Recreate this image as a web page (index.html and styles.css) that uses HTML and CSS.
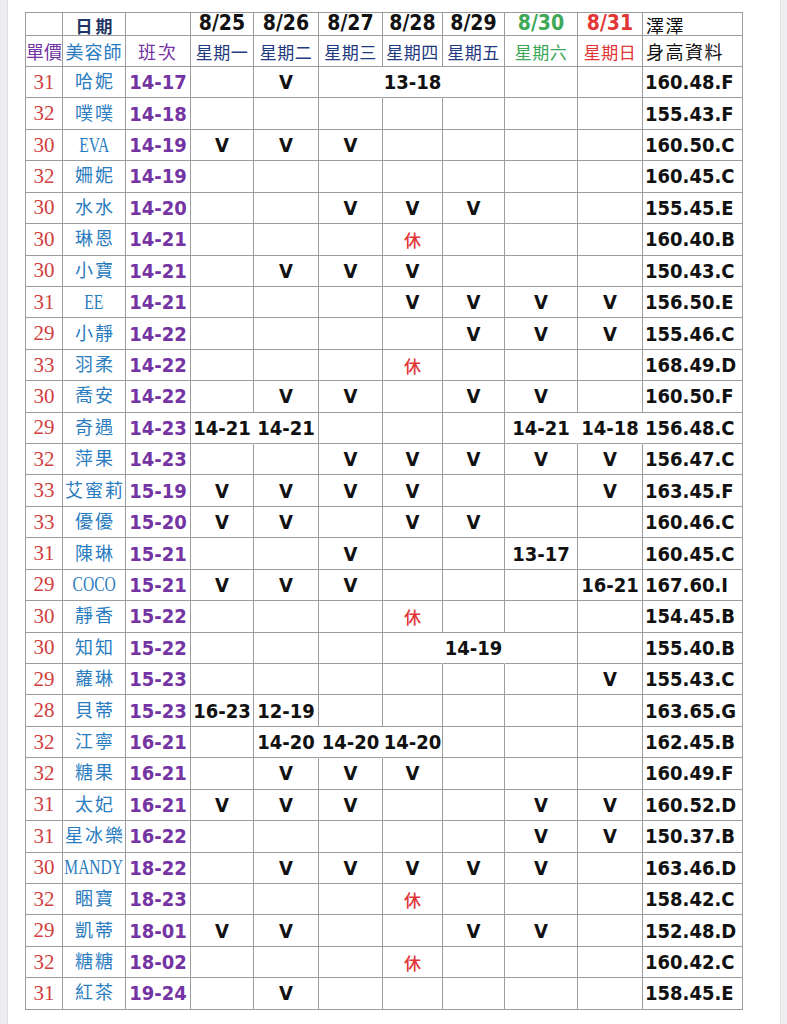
FILE: index.html
```html
<!DOCTYPE html>
<html lang="zh-Hant">
<head>
<meta charset="utf-8">
<title>排班表</title>
<link rel="stylesheet" href="styles.css">
</head>
<body>
<div class="edge edge-left"></div>
<main class="page">
<table class="sheet">
<colgroup>
<col class="c1"><col class="c2"><col class="c3"><col class="c4"><col class="c5"><col class="c6"><col class="c7"><col class="c8"><col class="c9"><col class="c10"><col class="c11">
</colgroup>
<tbody>
<tr class="hr1">
<td></td><td class="hdate">日期</td><td></td>
<td class="dt">8/25</td><td class="dt">8/26</td><td class="dt">8/27</td><td class="dt">8/28</td><td class="dt">8/29</td><td class="dt green">8/30</td><td class="dt red">8/31</td>
<td class="hz">澤澤</td>
</tr>
<tr class="hr2">
<td class="hprice">單價</td><td class="hname">美容師</td><td class="hshift">班次</td>
<td class="wk">星期一</td><td class="wk">星期二</td><td class="wk">星期三</td><td class="wk">星期四</td><td class="wk">星期五</td><td class="wk green">星期六</td><td class="wk red">星期日</td>
<td class="hz">身高資料</td>
</tr>
<tr><td class="p">31</td><td class="n">哈妮</td><td class="s">14-17</td><td class="d"></td><td class="d">V</td><td class="d nr"></td><td class="d nr">13-18</td><td class="d"></td><td class="d"></td><td class="d"></td><td class="h">160.48.F</td></tr>
<tr><td class="p">32</td><td class="n">噗噗</td><td class="s">14-18</td><td class="d"></td><td class="d"></td><td class="d"></td><td class="d"></td><td class="d"></td><td class="d"></td><td class="d"></td><td class="h">155.43.F</td></tr>
<tr><td class="p">30</td><td class="n"><span class="lat">EVA</span></td><td class="s">14-19</td><td class="d">V</td><td class="d">V</td><td class="d">V</td><td class="d"></td><td class="d"></td><td class="d"></td><td class="d"></td><td class="h">160.50.C</td></tr>
<tr><td class="p">32</td><td class="n">姍妮</td><td class="s">14-19</td><td class="d"></td><td class="d"></td><td class="d"></td><td class="d"></td><td class="d"></td><td class="d"></td><td class="d"></td><td class="h">160.45.C</td></tr>
<tr><td class="p">30</td><td class="n">水水</td><td class="s">14-20</td><td class="d"></td><td class="d"></td><td class="d">V</td><td class="d">V</td><td class="d">V</td><td class="d"></td><td class="d"></td><td class="h">155.45.E</td></tr>
<tr><td class="p">30</td><td class="n">琳恩</td><td class="s">14-21</td><td class="d"></td><td class="d"></td><td class="d"></td><td class="d rest">休</td><td class="d"></td><td class="d"></td><td class="d"></td><td class="h">160.40.B</td></tr>
<tr><td class="p">30</td><td class="n">小寶</td><td class="s">14-21</td><td class="d"></td><td class="d">V</td><td class="d">V</td><td class="d">V</td><td class="d"></td><td class="d"></td><td class="d"></td><td class="h">150.43.C</td></tr>
<tr><td class="p">31</td><td class="n"><span class="lat">EE</span></td><td class="s">14-21</td><td class="d"></td><td class="d"></td><td class="d"></td><td class="d">V</td><td class="d">V</td><td class="d">V</td><td class="d">V</td><td class="h">156.50.E</td></tr>
<tr><td class="p">29</td><td class="n">小靜</td><td class="s">14-22</td><td class="d"></td><td class="d"></td><td class="d"></td><td class="d"></td><td class="d">V</td><td class="d">V</td><td class="d">V</td><td class="h">155.46.C</td></tr>
<tr><td class="p">33</td><td class="n">羽柔</td><td class="s">14-22</td><td class="d"></td><td class="d"></td><td class="d"></td><td class="d rest">休</td><td class="d"></td><td class="d"></td><td class="d"></td><td class="h">168.49.D</td></tr>
<tr><td class="p">30</td><td class="n">喬安</td><td class="s">14-22</td><td class="d"></td><td class="d">V</td><td class="d">V</td><td class="d"></td><td class="d">V</td><td class="d">V</td><td class="d"></td><td class="h">160.50.F</td></tr>
<tr><td class="p">29</td><td class="n">奇遇</td><td class="s">14-23</td><td class="d nr">14-21</td><td class="d">14-21</td><td class="d"></td><td class="d"></td><td class="d"></td><td class="d nr">14-21</td><td class="d nr">14-18</td><td class="h">156.48.C</td></tr>
<tr><td class="p">32</td><td class="n">萍果</td><td class="s">14-23</td><td class="d"></td><td class="d"></td><td class="d">V</td><td class="d">V</td><td class="d">V</td><td class="d">V</td><td class="d">V</td><td class="h">156.47.C</td></tr>
<tr><td class="p">33</td><td class="n">艾蜜莉</td><td class="s">15-19</td><td class="d">V</td><td class="d">V</td><td class="d">V</td><td class="d">V</td><td class="d"></td><td class="d"></td><td class="d">V</td><td class="h">163.45.F</td></tr>
<tr><td class="p">33</td><td class="n">優優</td><td class="s">15-20</td><td class="d">V</td><td class="d">V</td><td class="d"></td><td class="d">V</td><td class="d">V</td><td class="d"></td><td class="d"></td><td class="h">160.46.C</td></tr>
<tr><td class="p">31</td><td class="n">陳琳</td><td class="s">15-21</td><td class="d"></td><td class="d"></td><td class="d">V</td><td class="d"></td><td class="d"></td><td class="d">13-17</td><td class="d"></td><td class="h">160.45.C</td></tr>
<tr><td class="p">29</td><td class="n"><span class="lat">COCO</span></td><td class="s">15-21</td><td class="d">V</td><td class="d">V</td><td class="d">V</td><td class="d"></td><td class="d"></td><td class="d"></td><td class="d">16-21</td><td class="h">167.60.I</td></tr>
<tr><td class="p">30</td><td class="n">靜香</td><td class="s">15-22</td><td class="d"></td><td class="d"></td><td class="d"></td><td class="d rest">休</td><td class="d"></td><td class="d"></td><td class="d"></td><td class="h">154.45.B</td></tr>
<tr><td class="p">30</td><td class="n">知知</td><td class="s">15-22</td><td class="d"></td><td class="d"></td><td class="d"></td><td class="d nr"></td><td class="d nr">14-19</td><td class="d"></td><td class="d"></td><td class="h">155.40.B</td></tr>
<tr><td class="p">29</td><td class="n">蘿琳</td><td class="s">15-23</td><td class="d"></td><td class="d"></td><td class="d"></td><td class="d"></td><td class="d"></td><td class="d"></td><td class="d">V</td><td class="h">155.43.C</td></tr>
<tr><td class="p">28</td><td class="n">貝蒂</td><td class="s">15-23</td><td class="d">16-23</td><td class="d">12-19</td><td class="d"></td><td class="d"></td><td class="d"></td><td class="d"></td><td class="d"></td><td class="h">163.65.G</td></tr>
<tr><td class="p">32</td><td class="n">江寧</td><td class="s">16-21</td><td class="d"></td><td class="d nr">14-20</td><td class="d nr">14-20</td><td class="d">14-20</td><td class="d"></td><td class="d"></td><td class="d"></td><td class="h">162.45.B</td></tr>
<tr><td class="p">32</td><td class="n">糖果</td><td class="s">16-21</td><td class="d"></td><td class="d">V</td><td class="d">V</td><td class="d">V</td><td class="d"></td><td class="d"></td><td class="d"></td><td class="h">160.49.F</td></tr>
<tr><td class="p">31</td><td class="n">太妃</td><td class="s">16-21</td><td class="d">V</td><td class="d">V</td><td class="d">V</td><td class="d"></td><td class="d"></td><td class="d">V</td><td class="d">V</td><td class="h">160.52.D</td></tr>
<tr><td class="p">31</td><td class="n">星冰樂</td><td class="s">16-22</td><td class="d"></td><td class="d"></td><td class="d"></td><td class="d"></td><td class="d"></td><td class="d">V</td><td class="d">V</td><td class="h">150.37.B</td></tr>
<tr><td class="p">30</td><td class="n"><span class="lat">MANDY</span></td><td class="s">18-22</td><td class="d"></td><td class="d">V</td><td class="d">V</td><td class="d">V</td><td class="d">V</td><td class="d">V</td><td class="d"></td><td class="h">163.46.D</td></tr>
<tr><td class="p">32</td><td class="n">睏寶</td><td class="s">18-23</td><td class="d"></td><td class="d"></td><td class="d"></td><td class="d rest">休</td><td class="d"></td><td class="d"></td><td class="d"></td><td class="h">158.42.C</td></tr>
<tr><td class="p">29</td><td class="n">凱蒂</td><td class="s">18-01</td><td class="d">V</td><td class="d">V</td><td class="d"></td><td class="d"></td><td class="d">V</td><td class="d">V</td><td class="d"></td><td class="h">152.48.D</td></tr>
<tr><td class="p">32</td><td class="n">糖糖</td><td class="s">18-02</td><td class="d"></td><td class="d"></td><td class="d"></td><td class="d rest">休</td><td class="d"></td><td class="d"></td><td class="d"></td><td class="h">160.42.C</td></tr>
<tr><td class="p">31</td><td class="n">紅茶</td><td class="s">19-24</td><td class="d"></td><td class="d">V</td><td class="d"></td><td class="d"></td><td class="d"></td><td class="d"></td><td class="d"></td><td class="h">158.45.E</td></tr>
</tbody>
</table>
</main>
<div class="edge edge-right"></div>
</body>
</html>
```

FILE: styles.css
```css
html, body {
  margin: 0;
  padding: 0;
  background: #ffffff;
}
body {
  display: flex;
  min-height: 1024px;
  font-family: "Noto Sans CJK TC", sans-serif;
}
.edge {
  flex: none;
  background: #eeeef0;
}
.edge-left {
  width: 7px;
  border-right: 1px solid #dedee2;
}
.edge-right {
  width: 6px;
  border-left: 1px solid #e4e4e8;
}
.page {
  flex: 1;
  padding: 12px 0 0 17px;
}
.sheet {
  border-collapse: separate;
  border-spacing: 0;
  table-layout: fixed;
  width: 718px;
  border-top: 1px solid #9c9c9c;
  border-left: 1px solid #9c9c9c;
}
.c1 { width: 37px; }
.c2 { width: 63px; }
.c3 { width: 65px; }
.c4 { width: 63px; }
.c5 { width: 65px; }
.c6 { width: 64px; }
.c7 { width: 60px; }
.c8 { width: 62px; }
.c9 { width: 73px; }
.c10 { width: 65px; }
.c11 { width: 100px; }
.sheet td {
  padding: 0;
  border-right: 1px solid #9c9c9c;
  border-bottom: 1px solid #9c9c9c;
  text-align: center;
  vertical-align: middle;
  white-space: nowrap;
  overflow: visible;
  line-height: 1;
}
.sheet td.nr {
  border-right-color: #ffffff;
}
.sheet tr { height: 31.43px; }
.sheet tr.hr1 { height: 22px; }
.sheet tr.hr2 { height: 31px; }

.hr1 td { vertical-align: bottom; padding-bottom: 1px; }
.hdate {
  font-family: "Noto Sans CJK TC", sans-serif;
  font-size: 17px;
  font-weight: 700;
  color: #1f3564;
  letter-spacing: 3px;
  padding-left: 3px !important;
}
.dt {
  font-family: "DejaVu Sans Condensed", "DejaVu Sans", sans-serif;
  font-weight: 700;
  font-size: 21px;
  color: #111;
}
.dt.green, .wk.green { color: #3ea858; }
.dt.red, .wk.red { color: #e23636; }
.hz {
  text-align: left !important;
  padding-left: 3px !important;
  font-family: "Noto Sans CJK TC", sans-serif;
  font-size: 18px;
  color: #111;
  letter-spacing: 1.5px;
}
.hprice {
  font-size: 18px;
  color: #7434a4;
  letter-spacing: 0;
}
.hname {
  font-size: 18px;
  color: #2a7cc0;
  letter-spacing: 1px;
}
.hshift {
  font-size: 18px;
  color: #7434a4;
  letter-spacing: 2px;
}
.wk {
  font-size: 17px;
  color: #1f3a80;
  letter-spacing: 0.5px;
}
.p {
  font-family: "Liberation Serif", serif;
  font-size: 21px;
  color: #cf3f3f;
}
.n {
  font-family: "Liberation Serif", "Noto Sans CJK TC", serif;
  font-size: 18px;
  color: #2a7cc0;
  letter-spacing: 2px;
  padding-left: 2px !important;
}
.lat {
  display: inline-block;
  font-size: 21px;
  letter-spacing: 0;
  margin: 0 -14px 0 -16px;
  transform: scaleX(0.74);
}
.s {
  font-family: "DejaVu Sans Condensed", "DejaVu Sans", sans-serif;
  font-weight: 700;
  font-size: 20px;
  color: #7434a4;
}
.d {
  font-family: "DejaVu Sans Condensed", "DejaVu Sans", sans-serif;
  font-weight: 700;
  font-size: 20px;
  color: #111;
}
.d.rest {
  font-family: "Noto Sans CJK TC", sans-serif;
  font-weight: 500;
  font-size: 17px;
  color: #e23636;
}
.h {
  text-align: left !important;
  padding-left: 2px !important;
  font-family: "DejaVu Sans Condensed", "DejaVu Sans", sans-serif;
  font-weight: 700;
  font-size: 20px;
  color: #111;
}
```
